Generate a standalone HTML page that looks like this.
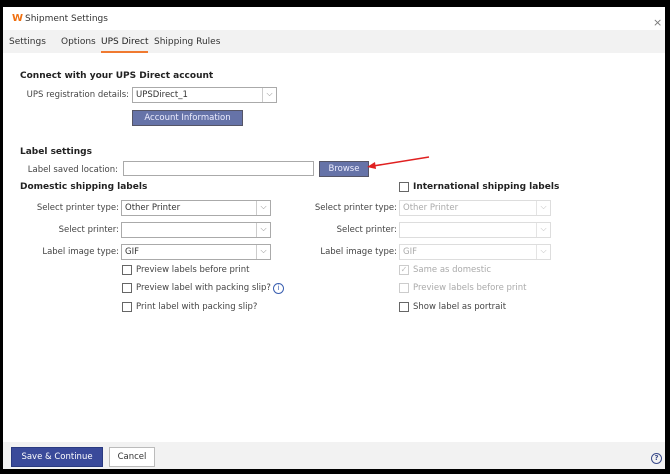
<!DOCTYPE html><html><head><style>
*{box-sizing:border-box;margin:0;padding:0}
body{width:670px;height:474px;background:#000;position:relative;overflow:hidden;font-family:"DejaVu Sans","Liberation Sans",sans-serif;font-size:9px;color:#333}
.win{position:absolute;left:3px;top:7px;width:662px;height:462px;background:#fff}
.abs{position:absolute}
.tabs{position:absolute;left:0;top:23px;width:662px;height:23px;background:#f2f2f2}
.tab{position:absolute;top:7px;font-size:9px;color:#333}
b{font-weight:bold;color:#222}
.lbl{position:absolute;text-align:right;font-size:8.5px;color:#444}
.sel{position:absolute;height:16px;border:1px solid #aaa;background:#fff;font-size:8.5px;padding:2px 3px;color:#333}
.sel::after{content:"⌵";position:absolute;right:0;top:0;width:13px;height:14px;border-left:1px solid #ccc;text-align:center;color:#888;font-size:8px;line-height:12px}
.dis{color:#aaa;border-color:#ddd}
.dis::after{color:#bbb;border-color:#e4e4e4}
.cb{position:absolute;width:10px;height:10px;border:1px solid #666;background:#fff}
.cbt{position:absolute;font-size:8.5px;color:#444}
.btn{position:absolute;background:#6673a8;color:#eef;font-size:8.5px;text-align:center;border:1px solid #556}
</style></head><body><div class="win">
<div class="abs" style="left:9px;top:6px;color:#f07010;font-weight:bold;font-size:10px">W</div>
<div class="abs" style="left:22px;top:7px;font-size:9px;color:#333">Shipment Settings</div>
<div class="abs" style="left:650px;top:9px;color:#777;font-size:11px">×</div>
<div class="tabs">
<div class="tab" style="left:6px">Settings</div>
<div class="tab" style="left:58px">Options</div>
<div class="tab" style="left:98px;color:#222">UPS Direct</div>
<div class="abs" style="left:98px;top:21px;width:47px;height:2px;background:#f07a30"></div>
<div class="tab" style="left:151px">Shipping Rules</div>
</div>
<div class="abs" style="left:17px;top:64px"><b>Connect with your UPS Direct account</b></div>
<div class="lbl" style="left:20px;width:106px;top:83px">UPS registration details:</div>
<div class="sel" style="left:129px;top:80px;width:145px">UPSDirect_1</div>
<div class="btn" style="left:129px;top:103px;width:111px;height:16px;line-height:14px">Account Information</div>
<div class="abs" style="left:17px;top:140px"><b>Label settings</b></div>
<div class="lbl" style="left:20px;width:95px;top:158px">Label saved location:</div>
<div class="abs" style="left:120px;top:154px;width:191px;height:15px;border:1px solid #aaa"></div>
<div class="btn" style="left:316px;top:154px;width:50px;height:16px;line-height:14px">Browse</div>
<svg class="abs" style="left:360px;top:148px" width="70" height="20"><line x1="66" y1="2" x2="10" y2="11" stroke="#e02020" stroke-width="1.5"/><polygon points="4,12 12,7 13,14" fill="#e02020"/></svg>
<div class="abs" style="left:17px;top:175px"><b>Domestic shipping labels</b></div>
<div class="lbl" style="left:10px;width:106px;top:196px">Select printer type:</div>
<div class="sel" style="left:118px;top:193px;width:150px">Other Printer</div>
<div class="lbl" style="left:10px;width:106px;top:218px">Select printer:</div>
<div class="sel" style="left:118px;top:215px;width:150px"></div>
<div class="lbl" style="left:10px;width:106px;top:240px">Label image type:</div>
<div class="sel" style="left:118px;top:237px;width:150px">GIF</div>
<div class="cb" style="left:119px;top:258px"></div><div class="cbt" style="left:133px;top:258px">Preview labels before print</div>
<div class="cb" style="left:119px;top:276px"></div><div class="cbt" style="left:133px;top:276px">Preview label with packing slip?</div>
<div class="abs" style="left:270px;top:276px;width:11px;height:11px;border:1px solid #3a5fb0;border-radius:50%;color:#3a5fb0;font-size:7px;text-align:center;line-height:9px">i</div>
<div class="cb" style="left:119px;top:295px"></div><div class="cbt" style="left:133px;top:295px">Print label with packing slip?</div>
<div class="cb" style="left:396px;top:175px"></div><div class="abs" style="left:410px;top:175px"><b>International shipping labels</b></div>
<div class="lbl" style="left:290px;width:104px;top:196px">Select printer type:</div>
<div class="sel dis" style="left:396px;top:193px;width:152px">Other Printer</div>
<div class="lbl" style="left:290px;width:104px;top:218px">Select printer:</div>
<div class="sel dis" style="left:396px;top:215px;width:152px"></div>
<div class="lbl" style="left:290px;width:104px;top:240px">Label image type:</div>
<div class="sel dis" style="left:396px;top:237px;width:152px">GIF</div>
<div class="cb" style="left:396px;top:258px;border-color:#ccc;color:#bbb;font-size:8px;line-height:8px;text-align:center">✓</div><div class="cbt" style="left:410px;top:258px;color:#aaa">Same as domestic</div>
<div class="cb" style="left:396px;top:276px;border-color:#ccc"></div><div class="cbt" style="left:410px;top:276px;color:#aaa">Preview labels before print</div>
<div class="cb" style="left:396px;top:295px"></div><div class="cbt" style="left:410px;top:295px">Show label as portrait</div>
<div class="abs" style="left:0;top:435px;width:662px;height:27px;background:#f2f2f2"></div>
<div class="btn" style="left:8px;top:440px;width:92px;height:20px;line-height:18px;background:#3a4a9a;color:#fff;border-color:#2a3a80">Save &amp; Continue</div>
<div class="abs" style="left:106px;top:440px;width:46px;height:20px;border:1px solid #bbb;background:#fff;text-align:center;line-height:18px;font-size:8.5px">Cancel</div>
<div class="abs" style="left:648px;top:446px;width:11px;height:11px;border:1.5px solid #3a4a8a;border-radius:50%;font-size:7px;text-align:center;line-height:8px;color:#3a4a8a;font-weight:bold">?</div>
</div></body></html>
